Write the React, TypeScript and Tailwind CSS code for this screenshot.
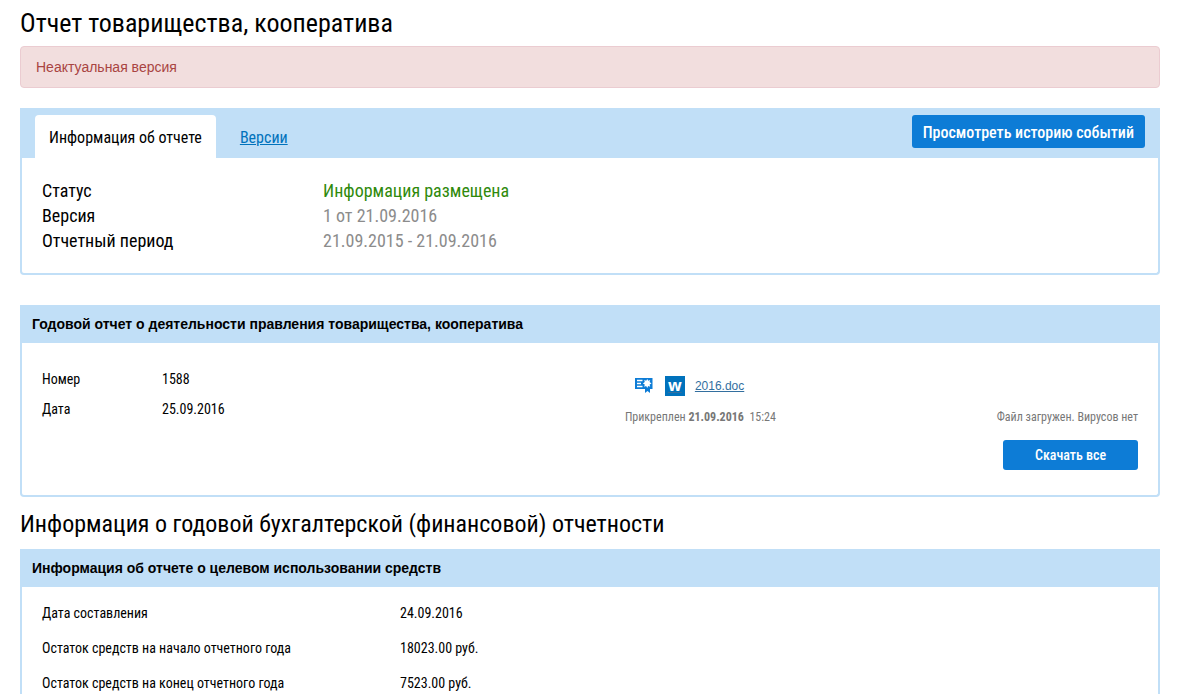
import type { ReactNode } from 'react'

const statusRows = [
  { label: 'Статус', value: 'Информация размещена', className: 'text-[#2f8a0c]' },
  { label: 'Версия', value: '1 от 21.09.2016', className: 'text-[#8c8c8c]' },
  { label: 'Отчетный период', value: '21.09.2015 - 21.09.2016', className: 'text-[#8c8c8c]' },
]

const reportRows = [
  { label: 'Номер', value: '1588' },
  { label: 'Дата', value: '25.09.2016' },
]

const fundRows = [
  { label: 'Дата составления', value: '24.09.2016' },
  { label: 'Остаток средств на начало отчетного года', value: '18023.00 руб.' },
  { label: 'Остаток средств на конец отчетного года', value: '7523.00 руб.' },
]

function SignatureIcon() {
  return (
    <svg className="mb-0.5 h-4 w-[18px]" viewBox="0 0 18 16" aria-hidden="true">
      <path fill="#0d7cd6" d="M0 1h17.500v11H15v4l-2.500-2L10 16v-4H0z" />
      <path stroke="#fff" strokeWidth="1.700" d="M2 3.500H7.500M2 6.500H6M2 9.500H7.500" />
      <path
        fill="#fff"
        d="M12.200 2l1 1.700 2-.6-.6 2 1.900 1.400-1.900 1 .6 2.200-2-.7-1 2-1-2-2 .7.600-2.200-1.900-1L9.800 5.100l-.6-2 2 .6z"
      />
    </svg>
  )
}

function WordIcon() {
  return (
    <span
      aria-hidden="true"
      className="flex size-5 items-center justify-center bg-[#0072bc] pb-[3px] font-['Open_Sans',sans-serif] text-base leading-4 font-bold text-white"
    >
      w
    </span>
  )
}

function Panel({ title, children }: { title: string; children: ReactNode }) {
  return (
    <section className="rounded-b-sm border-2 border-t-0 border-[#c1dff7]">
      <h2 className="-mx-0.5 bg-[#c1dff7] px-3 font-['Liberation_Sans',Arial,sans-serif] text-sm leading-[38px] font-bold">
        {title}
      </h2>
      {children}
    </section>
  )
}

export default function App() {
  return (
    <main className="bg-white pr-[22px] pb-5 pl-5 font-['Roboto_Condensed','Liberation_Sans_Narrow',Roboto,sans-serif] text-sm text-black">
      <h1 className="pt-1 text-[26px] leading-[38px]">Отчет товарищества, кооператива</h1>

      {/* Alert */}
      <div
        role="alert"
        className="mt-1 rounded border border-[#ebccd1] bg-[#f2dede] px-[15px] font-['Liberation_Sans',Arial,sans-serif] text-sm leading-10 text-[#a94442]"
      >
        Неактуальная версия
      </div>

      {/* Tabs */}
      <section className="mt-5 rounded-b-sm border-2 border-t-0 border-[#c1dff7]">
        <div className="-mx-0.5 flex items-start justify-between bg-[#c1dff7] px-[15px] pt-[7px]">
          <nav className="flex text-base leading-[41px]">
            <a href="#info" className="rounded-t bg-white px-3.5 pt-0.5">
              Информация об отчете
            </a>
            <a href="#versions" className="px-6 pt-0.5 text-[#0072bc] underline">
              Версии
            </a>
          </nav>
          <button type="button" className="rounded-[3px] bg-[#0d7cd6] px-[11px] pt-0.5 text-base leading-[31px] font-medium text-white">
            Просмотреть историю событий
          </button>
        </div>
        <dl className="px-1.5 py-5 text-lg leading-[25px]">
          {statusRows.map((row) => (
            <div key={row.label} className="flex">
              <dt className="w-1/4 px-3.5">{row.label}</dt>
              <dd className={`px-3.5 ${row.className}`}>{row.value}</dd>
            </div>
          ))}
        </dl>
      </section>

      {/* Annual report */}
      <div className="mt-[30px]">
        <Panel title="Годовой отчет о деятельности правления товарищества, кооператива">
          <div className="flex px-5 pt-[21px] pb-[25px]">
            <dl className="w-[53%] leading-[30px]">
              {reportRows.map((row) => (
                <div key={row.label} className="flex">
                  <dt className="w-[120px]">{row.label}</dt>
                  <dd>{row.value}</dd>
                </div>
              ))}
            </dl>
            <div className="flex-1 pt-3 pl-0.5">
              <div className="flex items-center pl-2.5">
                <SignatureIcon />
                <a
                  href="#file"
                  className="ml-3 flex gap-2.5 font-['Liberation_Sans',Arial,sans-serif] text-xs leading-5 text-[#336f9f] underline"
                >
                  <WordIcon />
                  2016.doc
                </a>
              </div>
              <div className="mt-3 flex justify-between text-xs leading-[18px] text-[#777]">
                <p>
                  Прикреплен <b>21.09.2016</b>&nbsp; 15:24
                </p>
                <p>Файл загружен. Вирусов нет</p>
              </div>
              <div className="mt-[14px] flex justify-end">
                <button type="button" className="w-[135px] rounded-[3px] bg-[#0d7cd6] text-sm leading-[30px] font-medium text-white">
                  Скачать все
                </button>
              </div>
            </div>
          </div>
        </Panel>
      </div>

      <h1 className="mt-2 mb-1.5 text-[24px] leading-[38px]">Информация о годовой бухгалтерской (финансовой) отчетности</h1>

      {/* Use of funds */}
      <Panel title="Информация об отчете о целевом использовании средств">
        <dl className="px-5 py-[9px] leading-[35px]">
          {fundRows.map((row) => (
            <div key={row.label} className="flex">
              <dt className="w-[358px]">{row.label}</dt>
              <dd>{row.value}</dd>
            </div>
          ))}
        </dl>
      </Panel>
    </main>
  )
}
